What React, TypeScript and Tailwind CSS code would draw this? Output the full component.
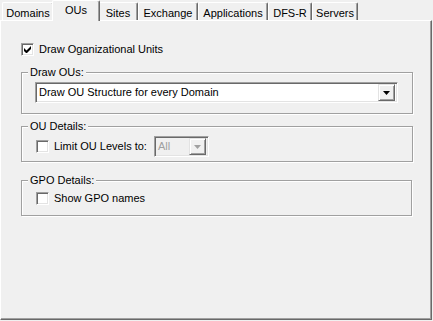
import React from 'react';

const tabs = [
  {label: 'Domains', w: 'w-[52px]'},
  {label: 'OUs', w: 'w-[48px]', active: true},
  {label: 'Sites', w: 'w-[40px]'},
  {label: 'Exchange', w: 'w-[60px]'},
  {label: 'Applications', w: 'w-[70px]'},
  {label: 'DFS-R', w: 'w-[44px]'},
  {label: 'Servers', w: 'w-[46px]'},
];

const Checkbox = ({checked}: {checked?: boolean}) => (
  <div className="w-[13px] h-[13px] shrink-0 bg-white border border-t-[#a0a0a0] border-l-[#a0a0a0] border-r-white border-b-white shadow-[inset_1px_1px_0_#696969,inset_-1px_-1px_0_#e3e3e3] flex items-center justify-center">
    {checked && (
      <svg width="7" height="7" viewBox="0 0 7 7" className="block">
        <path d="M0 2v3l2 2h1l4-4V0L2.5 4.5z" fill="#000" />
      </svg>
    )}
  </div>
);

const Arrow = ({color}: {color: string}) => (
  <svg width="7" height="4" viewBox="0 0 7 4" className="block">
    <path d="M0 0h7L3.5 4z" fill={color} />
  </svg>
);

const Group = ({
  label,
  className,
  children,
}: {
  label: string;
  className?: string;
  children: React.ReactNode;
}) => (
  <div
    className={`relative border border-[#a0a0a0] shadow-[inset_1px_1px_0_#fff,1px_1px_0_#fff] ${className ?? ''}`}
  >
    <span className="absolute left-[6px] top-[-7px] bg-[#f0f0f0] px-[2px] leading-[13px]">{label}</span>
    {children}
  </div>
);

export default function App() {
  return (
    <div className="w-[433px] h-[321px] bg-[#f0f0f0] flex flex-col text-[11px] leading-[13px] text-black font-['Liberation_Sans',Arial,sans-serif] select-none">
      <div className="h-[20px] flex items-end pl-[2px] shrink-0">
        {tabs.map((t) =>
          t.active ? (
            <div
              key={t.label}
              className={`${t.w} h-[21px] -mx-[2px] -mb-[1px] relative z-10 bg-[#f0f0f0] border-l border-t border-r border-l-white border-t-white border-r-[#696969] shadow-[inset_-1px_0_0_#a0a0a0] rounded-t-[2px] flex justify-center pt-[3px]`}
            >
              {t.label}
            </div>
          ) : (
            <div
              key={t.label}
              className={`${t.w} h-[18px] bg-[#f0f0f0] border-l border-t border-r border-l-white border-t-white border-r-[#696969] shadow-[inset_-1px_0_0_#a0a0a0] rounded-t-[2px] flex justify-center pt-[4px]`}
            >
              {t.label}
            </div>
          )
        )}
      </div>
      <div className="flex-1 mr-[1px] mb-[1px] border border-l-white border-t-white border-r-[#696969] border-b-[#696969] shadow-[inset_-1px_-1px_0_#a0a0a0] pl-[20px] pr-[18px] pt-[22px]">
        <div className="flex items-center gap-[5px]">
          <Checkbox checked />
          <span>Draw Oganizational Units</span>
        </div>

        <Group label="Draw OUs:" className="mt-[16px] h-[42px] pl-[13px] pr-[14px] pt-[9px]">
          <div className="h-[21px] bg-white border border-t-[#a0a0a0] border-l-[#a0a0a0] border-r-white border-b-white shadow-[inset_1px_1px_0_#696969,inset_-1px_-1px_0_#e3e3e3] flex items-center pl-[3px] pr-[2px]">
            <span className="flex-1">Draw OU Structure for every Domain</span>
            <div className="w-[17px] h-[17px] bg-[#f0f0f0] border border-t-[#e3e3e3] border-l-[#e3e3e3] border-r-[#696969] border-b-[#696969] shadow-[inset_1px_1px_0_#fff,inset_-1px_-1px_0_#a0a0a0] flex items-center justify-center">
              <Arrow color="#000" />
            </div>
          </div>
        </Group>

        <Group label="OU Details:" className="mt-[12px] h-[36px] pl-[14px] pt-[9px]">
          <div className="flex items-center">
            <Checkbox />
            <span className="ml-[5px]">Limit OU Levels to:</span>
            <div className="ml-[7px] w-[55px] h-[21px] bg-[#f0f0f0] border border-t-[#a0a0a0] border-l-[#a0a0a0] border-r-white border-b-white shadow-[inset_1px_1px_0_#696969,inset_-1px_-1px_0_#e3e3e3] flex items-center pl-[3px] pr-[2px]">
              <span className="flex-1 text-[#a0a0a0]">All</span>
              <div className="w-[17px] h-[17px] bg-[#f0f0f0] border border-t-[#e3e3e3] border-l-[#e3e3e3] border-r-[#696969] border-b-[#696969] shadow-[inset_1px_1px_0_#fff,inset_-1px_-1px_0_#a0a0a0] flex items-center justify-center">
                <Arrow color="#a0a0a0" />
              </div>
            </div>
          </div>
        </Group>

        <Group label="GPO Details:" className="mt-[18px] h-[36px] mr-[1px] pl-[14px] pt-[11px]">
          <div className="flex items-center gap-[5px]">
            <Checkbox />
            <span>Show GPO names</span>
          </div>
        </Group>
      </div>
    </div>
  );
}
